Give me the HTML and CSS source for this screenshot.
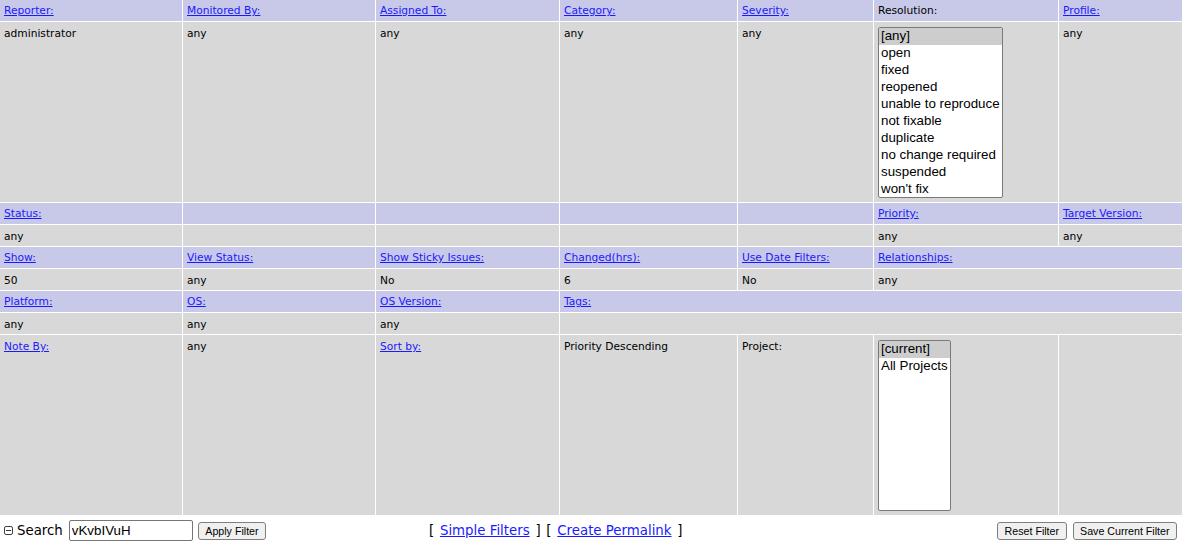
FILE: index.html
```html
<!DOCTYPE html>
<html>
<head>
<meta charset="utf-8">
<title>Filters</title>
<link rel="stylesheet" href="styles.css">
</head>
<body>
<table class="filters">
  <colgroup>
    <col class="c1"><col class="c2"><col class="c3"><col class="c4"><col class="c5"><col class="c6"><col class="c7">
  </colgroup>
  <tr class="hdr">
    <td><a href="#">Reporter:</a></td>
    <td><a href="#">Monitored By:</a></td>
    <td><a href="#">Assigned To:</a></td>
    <td><a href="#">Category:</a></td>
    <td><a href="#">Severity:</a></td>
    <td>Resolution:</td>
    <td><a href="#">Profile:</a></td>
  </tr>
  <tr class="val tall">
    <td>administrator</td>
    <td>any</td>
    <td>any</td>
    <td>any</td>
    <td>any</td>
    <td>
      <select class="list list-res" size="10" multiple>
        <option selected>[any]</option>
        <option>open</option>
        <option>fixed</option>
        <option>reopened</option>
        <option>unable to reproduce</option>
        <option>not fixable</option>
        <option>duplicate</option>
        <option>no change required</option>
        <option>suspended</option>
        <option>won't fix</option>
      </select>
    </td>
    <td>any</td>
  </tr>
  <tr class="hdr">
    <td><a href="#">Status:</a></td>
    <td></td><td></td><td></td><td></td>
    <td><a href="#">Priority:</a></td>
    <td><a href="#">Target Version:</a></td>
  </tr>
  <tr class="val">
    <td>any</td>
    <td></td><td></td><td></td><td></td>
    <td>any</td>
    <td>any</td>
  </tr>
  <tr class="hdr">
    <td><a href="#">Show:</a></td>
    <td><a href="#">View Status:</a></td>
    <td><a href="#">Show Sticky Issues:</a></td>
    <td><a href="#">Changed(hrs):</a></td>
    <td><a href="#">Use Date Filters:</a></td>
    <td colspan="2"><a href="#">Relationships:</a></td>
  </tr>
  <tr class="val">
    <td>50</td>
    <td>any</td>
    <td>No</td>
    <td>6</td>
    <td>No</td>
    <td colspan="2">any</td>
  </tr>
  <tr class="hdr">
    <td><a href="#">Platform:</a></td>
    <td><a href="#">OS:</a></td>
    <td><a href="#">OS Version:</a></td>
    <td colspan="4"><a href="#">Tags:</a></td>
  </tr>
  <tr class="val">
    <td>any</td>
    <td>any</td>
    <td>any</td>
    <td colspan="4"></td>
  </tr>
  <tr class="val tall">
    <td><a href="#">Note By:</a></td>
    <td>any</td>
    <td><a href="#">Sort by:</a></td>
    <td>Priority Descending</td>
    <td>Project:</td>
    <td>
      <select class="list list-proj" size="10" multiple>
        <option selected>[current]</option>
        <option>All Projects</option>
      </select>
    </td>
    <td></td>
  </tr>
</table>

<div class="bar">
  <div class="bar-left">
    <svg class="collapse" width="9" height="9" viewBox="0 0 9 9" aria-hidden="true">
      <rect x="0.5" y="0.5" width="8" height="8" rx="1.6" fill="none" stroke="#3a3a3a" stroke-width="1"/>
      <line x1="2" y1="4.5" x2="7" y2="4.5" stroke="#3a3a3a" stroke-width="1"/>
    </svg>
    <span class="search-label">Search</span>
    <input class="search-input" type="text" value="vKvbIVuH">
    <button class="btn btn-apply" type="button">Apply Filter</button>
  </div>
  <div class="bar-mid">
    [ <a class="bar-link" href="#">Simple Filters</a> ] [ <a class="bar-link" href="#">Create Permalink</a> ]
  </div>
  <div class="bar-right">
    <button class="btn" type="button">Reset Filter</button>
    <button class="btn" type="button">Save Current Filter</button>
  </div>
</div>
</body>
</html>
```

FILE: styles.css
```css
html, body {
  margin: 0;
  padding: 0;
  background: #ffffff;
}

body {
  font-family: "DejaVu Sans", Verdana, sans-serif;
  font-size: 8pt;
  color: #000000;
}

a {
  color: #1a1aff;
  text-decoration: underline;
}

.filters {
  table-layout: fixed;
  border-collapse: separate;
  border-spacing: 1px;
  width: 1184px;
  margin: -1px -1px 0 -1px;
}

.c1 { width: 182px; }
.c2 { width: 192px; }
.c3 { width: 183px; }
.c4 { width: 177px; }
.c5 { width: 135px; }
.c6 { width: 184px; }
.c7 { width: 123px; }

.filters td {
  padding: 4px 3px 4px 4px;
  line-height: 13px;
  height: 13px;
  vertical-align: top;
  text-align: left;
  white-space: nowrap;
  overflow: hidden;
}

.hdr td {
  background: #c8c8e8;
}

.val td {
  background: #d8d8d8;
  padding-top: 5px;
  padding-bottom: 3px;
}

.tall td {
  height: 172px;
}

.list {
  display: block;
  box-sizing: border-box;
  height: 171px;
  margin: 0;
  padding: 0;
  border: 1px solid #7a7a7a;
  border-radius: 2px;
  background: #ffffff;
  font-family: "Liberation Sans", Arial, sans-serif;
  font-size: 13.33px;
  color: #000000;
  overflow: hidden;
}

.list option {
  padding: 0 2px 1px 2px;
  line-height: 15px;
  color: #000000;
}

.list option:checked {
  background: #cdcdcd linear-gradient(#cdcdcd, #cdcdcd);
  color: #000000;
}

.list-res { width: 125px; }
.list-proj { width: 73px; }

.bar {
  display: grid;
  grid-template-columns: 425px auto 1fr;
  align-items: center;
  padding: 4px 5px 4px 4px;
  font-family: "DejaVu Sans", Verdana, sans-serif;
  font-size: 13.33px;
}

.bar-left {
  display: flex;
  align-items: center;
}

.collapse {
  display: block;
  margin-right: 4px;
}

.search-label {
  margin-right: 6px;
}

.search-input {
  box-sizing: border-box;
  width: 124px;
  height: 21px;
  margin: 0;
  padding: 1px 2px;
  border: 1px solid #767676;
  border-radius: 2px;
  font-family: "Liberation Sans", Arial, sans-serif;
  font-size: 13.33px;
  color: #000000;
}

.btn {
  box-sizing: border-box;
  height: 18px;
  margin: 0;
  padding: 0 6.5px;
  border: 1px solid #7f7f7f;
  border-radius: 3px;
  background: #f0f0f0;
  font-family: "Liberation Sans", Arial, sans-serif;
  font-size: 10.67px;
  line-height: 14px;
  color: #000000;
}

.btn-apply {
  margin-left: 5px;
}

.bar-mid {
  white-space: nowrap;
  word-spacing: 1.5px;
}

.bar-link {
  word-spacing: 0;
}

.bar-right {
  display: flex;
  justify-content: flex-end;
  align-items: center;
  gap: 6px;
}
```
